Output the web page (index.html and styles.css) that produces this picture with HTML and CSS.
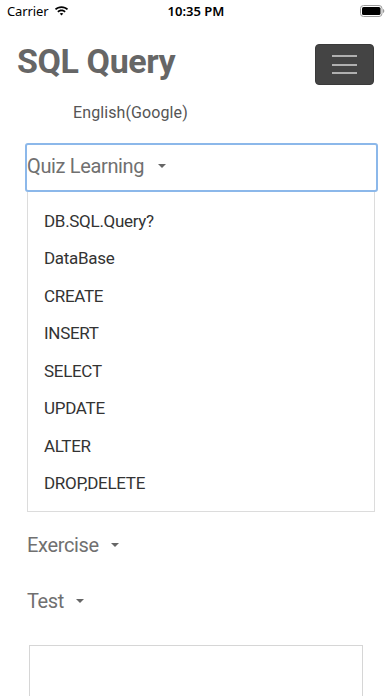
FILE: index.html
```html
<!DOCTYPE html>
<html lang="en">
<head>
<meta charset="utf-8">
<meta name="viewport" content="width=device-width, initial-scale=1">
<title>SQL Query</title>
<link rel="stylesheet" href="styles.css">
</head>
<body>
<div class="statusbar">
  <div class="sb-left">
    <span class="carrier">Carrier</span>
    <svg class="wifi" width="15" height="11" viewBox="0 0 15 11">
      <path d="M7.5 1.2C4.9 1.2 2.6 2.2 0.9 3.8L2.1 5C3.5 3.7 5.4 2.9 7.5 2.9S11.5 3.7 12.9 5L14.1 3.8C12.4 2.2 10.1 1.2 7.5 1.2Z" fill="#000"/>
      <path d="M7.5 4.6C5.9 4.6 4.4 5.2 3.3 6.2L4.5 7.4C5.3 6.7 6.4 6.3 7.5 6.3S9.7 6.7 10.5 7.4L11.7 6.2C10.6 5.2 9.1 4.6 7.5 4.6Z" fill="#000"/>
      <path d="M7.5 8C6.8 8 6.2 8.2 5.7 8.6L7.5 10.5L9.3 8.6C8.8 8.2 8.2 8 7.5 8Z" fill="#000"/>
    </svg>
  </div>
  <div class="sb-time">10:35 PM</div>
  <div class="sb-right">
    <svg class="battery" width="25" height="12" viewBox="0 0 25 12">
      <rect x="0.5" y="0.5" width="21.5" height="11" rx="3" fill="none" stroke="#9a9a9a" stroke-width="1"/>
      <rect x="2" y="2" width="18.5" height="8" rx="1.6" fill="#000"/>
      <path d="M23 4v4c0.8-0.3 1.3-1.1 1.3-2S23.8 4.3 23 4z" fill="#9a9a9a"/>
    </svg>
  </div>
</div>

<header class="header">
  <h1 class="title">SQL Query</h1>
  <button class="menu-btn" aria-label="menu">
    <span class="bar"></span><span class="bar"></span><span class="bar"></span>
  </button>
</header>

<div class="lang">English(Google)</div>

<nav class="nav">
  <div class="dropdown open">
    <div class="toggle active">Quiz Learning<span class="caret"></span></div>
    <ul class="menu">
      <li>DB.SQL.Query?</li>
      <li>DataBase</li>
      <li>CREATE</li>
      <li>INSERT</li>
      <li>SELECT</li>
      <li>UPDATE</li>
      <li>ALTER</li>
      <li>DROP,DELETE</li>
    </ul>
  </div>
  <div class="toggle first">Exercise<span class="caret"></span></div>
  <div class="toggle">Test<span class="caret"></span></div>
</nav>

<div class="textbox"></div>
</body>
</html>
```
FILE: styles.css
```css
* { box-sizing: border-box; }
html, body { margin: 0; padding: 0; }
body {
  width: 392px;
  height: 696px;
  overflow: hidden;
  background: #fff;
  font-family: Roboto, "Noto Sans", Arial, sans-serif;
  color: #333;
}

.statusbar {
  height: 22px;
  display: flex;
  align-items: center;
  justify-content: space-between;
  padding: 0 7px;
  position: relative;
  font-family: "Noto Sans", Roboto, sans-serif;
}
.sb-left { display: flex; align-items: center; gap: 5px; }
.carrier { font-size: 13px; color: #000; letter-spacing: -0.1px; }
.wifi { display: block; margin-top: -1px; }
.sb-time {
  position: absolute;
  left: 0; right: 0;
  text-align: center;
  font-size: 13px;
  font-weight: 600;
  color: #000;
  pointer-events: none;
}
.sb-right { display: flex; align-items: center; }
.battery { display: block; }

.header {
  display: flex;
  justify-content: space-between;
  align-items: flex-start;
  margin-top: 19px;
  padding: 0 18px 0 17px;
}
.title {
  margin: 0;
  font-size: 34px;
  line-height: 40px;
  font-weight: 700;
  color: #666;
  letter-spacing: -0.4px;
}
.menu-btn {
  margin-top: 3px;
  width: 59px;
  height: 41px;
  border: 1px solid #3a3a3a;
  border-radius: 4px;
  background: #444;
  display: flex;
  flex-direction: column;
  align-items: center;
  justify-content: center;
  gap: 6.3px;
  padding: 0;
}
.bar {
  display: block;
  width: 25px;
  height: 2px;
  background: #b0b0b0;
}

.lang {
  margin-top: 18px;
  padding-left: 73px;
  font-size: 16px;
  line-height: 20px;
  color: #555;
  letter-spacing: 0.1px;
}

.nav {
  margin-top: 20px;
  padding: 0 14px 0 25px;
}
.toggle {
  font-size: 20px;
  line-height: 24px;
  color: #707070;
  letter-spacing: -0.35px;
  padding: 16px 0 16px 2px;
}
.toggle.first { margin-top: 5px; }
.toggle.active {
  height: 49px;
  padding: 9px 0 0 0;
  border: 2px solid #8cb8ea;
  border-radius: 3px;
  width: 353px;
}
.caret {
  display: inline-block;
  vertical-align: 5px;
  margin-left: 12px;
  border-top: 4.5px solid #666;
  border-left: 4px solid transparent;
  border-right: 4px solid transparent;
}
.toggle.active .caret { margin-left: 14px; }

.menu {
  list-style: none;
  margin: 0 0 0 2px;
  width: 348px;
  padding: 10.5px 0 8.5px 16px;
  border: 1px solid #dcdcdc;
  border-top: none;
}
.menu li {
  font-size: 17px;
  line-height: 37.5px;
  color: #333;
  letter-spacing: -0.3px;
}

.textbox {
  margin: 16px 0 0 29px;
  width: 334px;
  height: 80px;
  border: 1px solid #d6d6d6;
}
```
